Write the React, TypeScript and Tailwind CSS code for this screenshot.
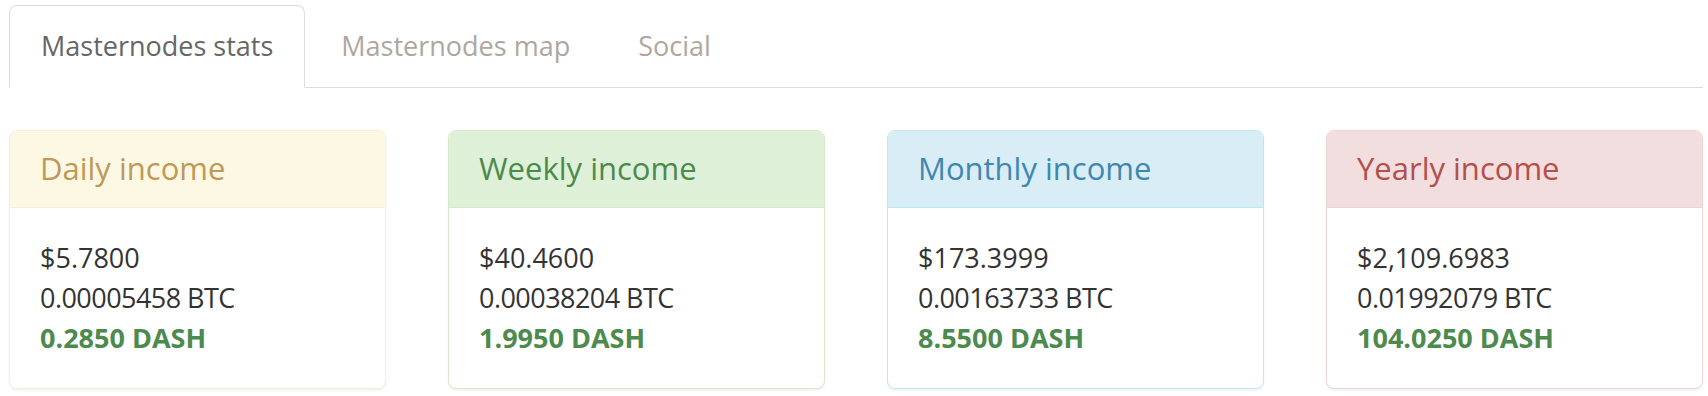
import React from 'react';

type Tone = 'warning' | 'success' | 'info' | 'danger';

interface IncomeCardProps {
  title: string;
  usd: string;
  btc: string;
  dash: string;
  tone: Tone;
}

const toneClasses: Record<Tone, { border: string; heading: string }> = {
  warning: {
    border: 'border-[#fbeed5]',
    heading: 'bg-[#fcf8e3] text-[#bf9958] border-[#fbeed5]',
  },
  success: {
    border: 'border-[#d6e9c6]',
    heading: 'bg-[#dff0d8] text-[#4b8a4b] border-[#d6e9c6]',
  },
  info: {
    border: 'border-[#bce8f1]',
    heading: 'bg-[#d9edf7] text-[#3f87ae] border-[#bce8f1]',
  },
  danger: {
    border: 'border-[#eed3d7]',
    heading: 'bg-[#f2dede] text-[#b44f4c] border-[#eed3d7]',
  },
};

const incomes: IncomeCardProps[] = [
  { title: 'Daily income', usd: '$5.7800', btc: '0.00005458 BTC', dash: '0.2850 DASH', tone: 'warning' },
  { title: 'Weekly income', usd: '$40.4600', btc: '0.00038204 BTC', dash: '1.9950 DASH', tone: 'success' },
  { title: 'Monthly income', usd: '$173.3999', btc: '0.00163733 BTC', dash: '8.5500 DASH', tone: 'info' },
  { title: 'Yearly income', usd: '$2,109.6983', btc: '0.01992079 BTC', dash: '104.0250 DASH', tone: 'danger' },
];

const tabs = ['Masternodes stats', 'Masternodes map', 'Social'];

function IncomeCard({ title, usd, btc, dash, tone }: IncomeCardProps) {
  const t = toneClasses[tone];
  return (
    <div className={`rounded-[8px] border bg-white shadow-[0_2px_2px_rgba(0,0,0,0.05)] overflow-hidden ${t.border}`}>
      <div className={`border-b px-[30px] pt-[20px] pb-[21px] text-[31px] leading-[35px] ${t.heading}`}>
        {title}
      </div>
      <div className="p-[30px] text-[27px] leading-[40px] text-[#333]">
        <div>{usd}</div>
        <div className="tracking-[-0.02em]">{btc}</div>
        <div className="font-bold text-[#4d8a4d]">{dash}</div>
      </div>
    </div>
  );
}

export default function App() {
  const active = 0;

  return (
    <div
      className="min-h-screen bg-white pt-[5px] pl-[9px] pr-[5px]"
      style={{ fontFamily: '"Open Sans", "Noto Sans", sans-serif' }}
    >
      {/* Tabs */}
      <ul className="flex border-b border-[#ddd]">
        {tabs.map((tab, index) => (
          <li key={tab} className="-mb-px mr-[4px]">
            <span
              className={`block rounded-t-[8px] border px-[31px] pt-[20px] pb-[21px] text-[27px] leading-[40px] ${
                index === active
                  ? 'border-[#ddd] border-b-white bg-white text-[#666]'
                  : 'border-transparent text-[#aea79f]'
              }`}
            >
              {tab}
            </span>
          </li>
        ))}
      </ul>

      {/* Income panels */}
      <div className="mt-[42px] grid grid-cols-4 gap-[62px]">
        {incomes.map((income) => (
          <IncomeCard key={income.title} {...income} />
        ))}
      </div>
    </div>
  );
}
